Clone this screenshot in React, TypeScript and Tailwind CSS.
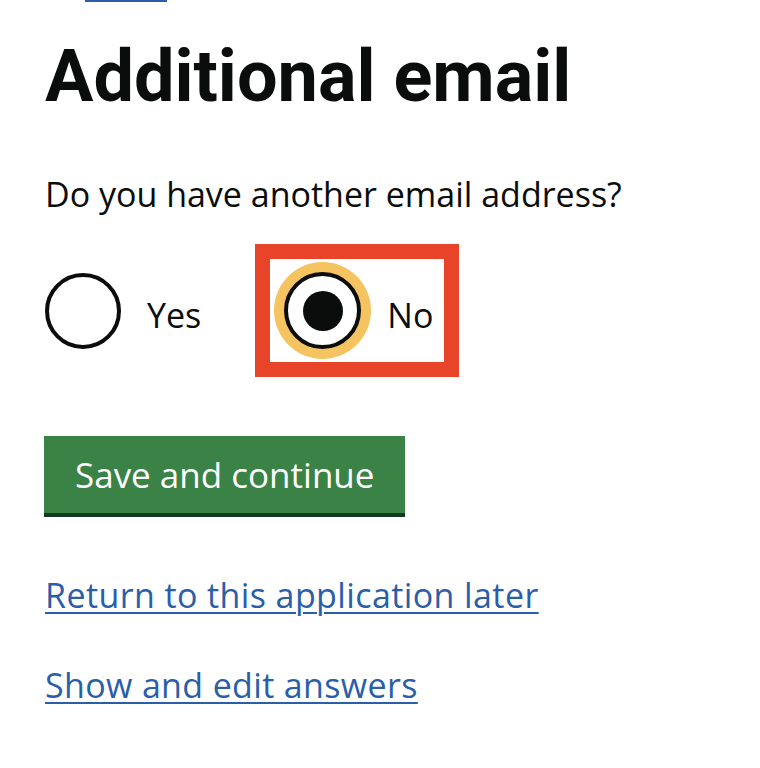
import React from "react";

export default function App() {
  return (
    <div
      className="w-[760px] min-h-[768px] bg-white pl-[45px] text-[#0b0c0c]"
      style={{ fontFamily: '"Open Sans", "Liberation Sans", sans-serif' }}
    >
      <div className="ml-[40px] h-[2px] w-[82px] bg-[#2a5ea8]" />
      <h1
        className="mt-[35px] text-[72px] font-bold leading-[80px]"
        style={{ fontFamily: 'Roboto, "Liberation Sans", sans-serif' }}
      >
        Additional email
      </h1>
      <p className="mt-[57px] text-[34px] leading-[40px]">Do you have another email address?</p>

      <div className="mt-[30px] flex items-center">
        <label className="flex items-center">
          <span className="box-border block h-[76px] w-[76px] rounded-full border-[4px] border-[#0b0c0c] bg-white" />
          <span className="ml-[26px] pt-[8px] text-[34px] leading-[40px]">Yes</span>
        </label>

        <div className="ml-[54px] border-[15px] border-[#e8442a] bg-white">
          <label className="flex h-[103px] items-center pl-[14px] pr-[11px]">
            <span className="box-border flex h-[77px] w-[77px] items-center justify-center rounded-full border-[4px] border-[#0b0c0c] bg-white shadow-[0_0_0_10px_#f5c35f]">
              <span className="block h-[40px] w-[40px] rounded-full bg-[#0b0c0c]" />
            </span>
            <span className="ml-[26px] pt-[8px] text-[34px] leading-[40px]">No</span>
          </label>
        </div>
      </div>

      <button
        className="-ml-px mt-[59px] flex h-[77px] items-center bg-[#3a8246] px-[31px] text-[35px] leading-[40px] text-white shadow-[0_4px_0_#133a1e]"
        style={{ fontFamily: '"Open Sans", "Liberation Sans", sans-serif' }}
      >
        Save and continue
      </button>

      <div className="mt-[62px]">
        <a
          href="#"
          className="text-[34px] leading-[40px] tracking-[0.4px] text-[#2a5ea8] underline decoration-[2px] underline-offset-[4px]"
        >
          Return to this application later
        </a>
      </div>
      <div className="mt-[50px]">
        <a
          href="#"
          className="text-[34px] leading-[40px] tracking-[0.35px] text-[#2a5ea8] underline decoration-[2px] underline-offset-[4px]"
        >
          Show and edit answers
        </a>
      </div>
    </div>
  );
}
